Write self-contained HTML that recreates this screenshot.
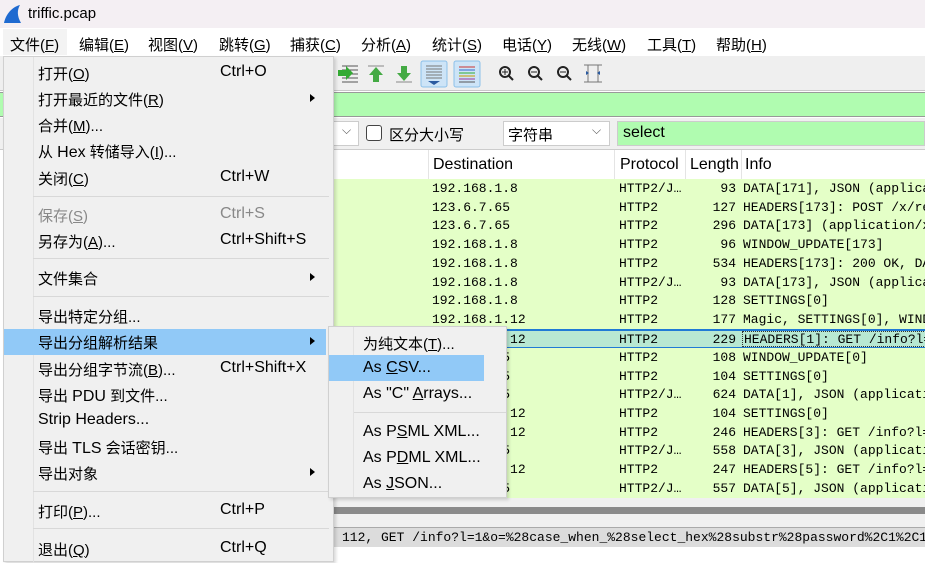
<!DOCTYPE html>
<html><head><meta charset="utf-8"><style>
*{margin:0;padding:0;box-sizing:border-box}
body{width:925px;height:562px;overflow:hidden;position:relative;background:#fff;font-family:"Liberation Sans","Noto Sans CJK SC",sans-serif;font-size:14px;color:#000}
.a{position:absolute;white-space:nowrap}
.m{font-family:"Liberation Mono","DejaVu Sans Mono",monospace;font-size:13px}
u{text-decoration:underline}
.row{position:absolute;left:334px;width:591px;height:19px;background:#e4ffc7;overflow:hidden}
.row span{position:absolute;top:2px;white-space:nowrap}
.mi{position:absolute;left:38px;white-space:nowrap;font-size:15px}
.sc{position:absolute;left:220px;white-space:nowrap;font-size:16px}
.arr{position:absolute;left:310px;width:0;height:0;border-left:5px solid #000;border-top:4px solid transparent;border-bottom:4px solid transparent}
.sep{position:absolute;left:33px;width:296px;height:1px;background:#d8d8d8}
.en{font-size:16px}
</style></head><body>
<div class="a" style="left:0;top:0;width:925px;height:28px;background:#f4eff3"></div>
<svg class="a" style="left:3px;top:4px" width="20" height="20" viewBox="0 0 20 20"><path d="M1 19 C3 10 9 3 17 1 C14 6 14 12 18 19 Z" fill="#1f6ad0"/></svg>
<div class="a" style="left:28px;top:5px;font-size:15px">triffic.pcap</div>
<div class="a" style="left:0;top:28px;width:925px;height:28px;background:#fff"></div>
<div class="a" style="left:3px;top:29px;width:64px;height:26px;background:#f3f3f3"></div>
<div class="a" style="left:10px;top:34px;font-size:15px">文件(<u>F</u>)</div>
<div class="a" style="left:79px;top:34px;font-size:15px">编辑(<u>E</u>)</div>
<div class="a" style="left:148px;top:34px;font-size:15px">视图(<u>V</u>)</div>
<div class="a" style="left:219px;top:34px;font-size:15px">跳转(<u>G</u>)</div>
<div class="a" style="left:290px;top:34px;font-size:15px">捕获(<u>C</u>)</div>
<div class="a" style="left:361px;top:34px;font-size:15px">分析(<u>A</u>)</div>
<div class="a" style="left:432px;top:34px;font-size:15px">统计(<u>S</u>)</div>
<div class="a" style="left:502px;top:34px;font-size:15px">电话(<u>Y</u>)</div>
<div class="a" style="left:572px;top:34px;font-size:15px">无线(<u>W</u>)</div>
<div class="a" style="left:647px;top:34px;font-size:15px">工具(<u>T</u>)</div>
<div class="a" style="left:716px;top:34px;font-size:15px">帮助(<u>H</u>)</div>
<div class="a" style="left:0;top:56px;width:925px;height:35px;background:#efefef;border-bottom:1px solid #c8c8c8"></div>
<svg class="a" style="left:334px;top:60px" width="280" height="28" viewBox="0 0 280 28">
<g fill="none" stroke="#555"><path d="M8 6h16M8 10h16M8 14h16M8 18h16M8 22h16"/></g>
<path d="M4 10h8v-4l7 7-7 7v-4H4z" fill="#3a3"/>
<path d="M34 6h16" stroke="#888"/><path d="M42 7l-7 8h4v7h6v-7h4z" fill="#4a4"/>
<path d="M62 22h16" stroke="#888"/><path d="M70 21l-7-8h4V6h6v7h4z" fill="#4a4"/>
<rect x="87" y="1" width="26" height="26" rx="2" fill="#cde4f7" stroke="#8cc0ea"/>
<g stroke="#777"><path d="M92 6h16M92 9h16M92 12h16M92 15h16M92 18h16"/></g><path d="M94 21h12l-6 4z" fill="#2a5aa0"/>
<rect x="120" y="1" width="26" height="26" rx="2" fill="#cde4f7" stroke="#8cc0ea"/>
<path d="M125 7h16" stroke="#c33"/><path d="M125 10h16" stroke="#36c"/><path d="M125 13h16" stroke="#3a3"/><path d="M125 16h16" stroke="#c90"/><path d="M125 19h16" stroke="#939"/><path d="M125 22h16" stroke="#555"/>
<g fill="none" stroke="#222" stroke-width="2"><circle cx="171" cy="12" r="5"/><path d="M175 16l4 4"/><circle cx="200" cy="12" r="5"/><path d="M204 16l4 4"/><circle cx="229" cy="12" r="5"/><path d="M233 16l4 4"/></g>
<path d="M168 12h6M171 9v6M197 12h6M226 12h6" stroke="#222"/>
<g stroke="#777"><path d="M250 5h18M250 22h18M254 5v17M264 5v17"/></g><path d="M252 11l3 2-3 2zM266 11l-3 2 3 2z" fill="#2a5aa0"/>
</svg>
<div class="a" style="left:0;top:92px;width:925px;height:25px;background:#b0fcb0;border-top:1px solid #9a9a9a;border-bottom:1px solid #999"></div>
<div class="a" style="left:0;top:118px;width:925px;height:32px;background:#f0f0f0;border-bottom:1px solid #ccc"></div>
<div class="a" style="left:334px;top:121px;width:25px;height:25px;background:#fff;border:1px solid #ccc;border-left:none"></div>
<div class="a" style="left:342px;top:123px;color:#555;font-size:12px">⌵</div>
<div class="a" style="left:366px;top:125px;width:16px;height:16px;border:1px solid #444;border-radius:3px;background:#fff"></div>
<div class="a" style="left:389px;top:124px;font-size:15px">区分大小写</div>
<div class="a" style="left:503px;top:121px;width:107px;height:25px;background:#fff;border:1px solid #ccc"></div>
<div class="a" style="left:508px;top:124px;font-size:15px">字符串</div>
<div class="a" style="left:592px;top:123px;color:#555;font-size:12px">⌵</div>
<div class="a" style="left:617px;top:121px;width:308px;height:25px;background:#b0fcb0;border:1px solid #ccc"></div>
<div class="a" style="left:623px;top:124px;font-size:16px">select</div>
<div class="a" style="left:334px;top:150px;width:591px;height:30px;background:#fff"></div>
<div class="a" style="left:428px;top:150px;width:1px;height:30px;background:#e4e4e4"></div>
<div class="a" style="left:614px;top:150px;width:1px;height:30px;background:#e4e4e4"></div>
<div class="a" style="left:685px;top:150px;width:1px;height:30px;background:#e4e4e4"></div>
<div class="a" style="left:741px;top:150px;width:1px;height:30px;background:#e4e4e4"></div>
<div class="a" style="left:433px;top:156px;font-size:16px">Destination</div>
<div class="a" style="left:620px;top:156px;font-size:16px">Protocol</div>
<div class="a" style="left:690px;top:156px;font-size:16px;width:50px;overflow:hidden">Length</div>
<div class="a" style="left:745px;top:156px;font-size:16px">Info</div>
<div class="m">
<div class="row" style="top:179px"><span style="left:98px">192.168.1.8</span><span style="left:285px">HTTP2/J…</span><span style="left:370px;width:32px;text-align:right">93</span><span style="left:409px">DATA[171], JSON (applica</span></div>
<div class="row" style="top:198px"><span style="left:98px">123.6.7.65</span><span style="left:285px">HTTP2</span><span style="left:370px;width:32px;text-align:right">127</span><span style="left:409px">HEADERS[173]: POST /x/re</span></div>
<div class="row" style="top:216px"><span style="left:98px">123.6.7.65</span><span style="left:285px">HTTP2</span><span style="left:370px;width:32px;text-align:right">296</span><span style="left:409px">DATA[173] (application/x</span></div>
<div class="row" style="top:235px"><span style="left:98px">192.168.1.8</span><span style="left:285px">HTTP2</span><span style="left:370px;width:32px;text-align:right">96</span><span style="left:409px">WINDOW_UPDATE[173]</span></div>
<div class="row" style="top:254px"><span style="left:98px">192.168.1.8</span><span style="left:285px">HTTP2</span><span style="left:370px;width:32px;text-align:right">534</span><span style="left:409px">HEADERS[173]: 200 OK, DA</span></div>
<div class="row" style="top:273px"><span style="left:98px">192.168.1.8</span><span style="left:285px">HTTP2/J…</span><span style="left:370px;width:32px;text-align:right">93</span><span style="left:409px">DATA[173], JSON (applica</span></div>
<div class="row" style="top:291px"><span style="left:98px">192.168.1.8</span><span style="left:285px">HTTP2</span><span style="left:370px;width:32px;text-align:right">128</span><span style="left:409px">SETTINGS[0]</span></div>
<div class="row" style="top:310px"><span style="left:98px">192.168.1.12</span><span style="left:285px">HTTP2</span><span style="left:370px;width:32px;text-align:right">177</span><span style="left:409px">Magic, SETTINGS[0], WIND</span></div>
<div class="row" style="top:329px;background:#b8e8d2;border-top:2px solid #1f7ad6;border-bottom:2px solid #1f7ad6;height:20px"><span style="left:98px;top:1px">192.168.1.12</span><span style="left:285px;top:1px">HTTP2</span><span style="left:370px;width:32px;text-align:right;top:1px">229</span><span style="left:408px;top:0;border:1px dotted #333;height:16px;padding-left:1px">HEADERS[1]: GET /info?l=</span></div>
<div class="row" style="top:348px"><span style="left:98px">123.6.7.65</span><span style="left:285px">HTTP2</span><span style="left:370px;width:32px;text-align:right">108</span><span style="left:409px">WINDOW_UPDATE[0]</span></div>
<div class="row" style="top:367px"><span style="left:98px">123.6.7.65</span><span style="left:285px">HTTP2</span><span style="left:370px;width:32px;text-align:right">104</span><span style="left:409px">SETTINGS[0]</span></div>
<div class="row" style="top:385px"><span style="left:98px">123.6.7.65</span><span style="left:285px">HTTP2/J…</span><span style="left:370px;width:32px;text-align:right">624</span><span style="left:409px">DATA[1], JSON (applicati</span></div>
<div class="row" style="top:404px"><span style="left:98px">192.168.1.12</span><span style="left:285px">HTTP2</span><span style="left:370px;width:32px;text-align:right">104</span><span style="left:409px">SETTINGS[0]</span></div>
<div class="row" style="top:423px"><span style="left:98px">192.168.1.12</span><span style="left:285px">HTTP2</span><span style="left:370px;width:32px;text-align:right">246</span><span style="left:409px">HEADERS[3]: GET /info?l=</span></div>
<div class="row" style="top:441px"><span style="left:98px">123.6.7.65</span><span style="left:285px">HTTP2/J…</span><span style="left:370px;width:32px;text-align:right">558</span><span style="left:409px">DATA[3], JSON (applicati</span></div>
<div class="row" style="top:460px"><span style="left:98px">192.168.1.12</span><span style="left:285px">HTTP2</span><span style="left:370px;width:32px;text-align:right">247</span><span style="left:409px">HEADERS[5]: GET /info?l=</span></div>
<div class="row" style="top:479px"><span style="left:98px">123.6.7.65</span><span style="left:285px">HTTP2/J…</span><span style="left:370px;width:32px;text-align:right">557</span><span style="left:409px">DATA[5], JSON (applicati</span></div>
</div>
<div class="a" style="left:334px;top:498px;width:591px;height:9px;background:#f0f0f0"></div>
<div class="a" style="left:334px;top:507px;width:591px;height:7px;background:#8a8a8a"></div>
<div class="a" style="left:334px;top:514px;width:591px;height:14px;background:#f0f0f0;border-bottom:1px solid #aaa"></div>
<div class="a" style="left:334px;top:528px;width:591px;height:19px;background:#dcdcdc"></div>
<div class="a m" style="left:342px;top:530px">112, GET /info?l=1&amp;o=%28case_when_%28select_hex%28substr%28password%2C1%2C1%2</div>
<div class="a" style="left:334px;top:547px;width:591px;height:15px;background:#fff"></div>
<div class="a" style="left:3px;top:56px;width:331px;height:506px;background:#f0f0f0;border:1px solid #d0d0d0;box-shadow:2px 2px 3px rgba(0,0,0,.15)">
<div style="position:absolute;left:29px;top:0;width:1px;height:506px;background:#e2e2e2"></div>
<div style="position:absolute;left:0;top:272px;width:322px;height:26px;background:#91c9f7"></div>
</div>
<div class="a" style="left:0;top:0">
<div class="mi" style="top:63px">打开(<u>O</u>)</div><div class="sc" style="top:63px">Ctrl+O</div>
<div class="mi" style="top:89px">打开最近的文件(<u>R</u>)</div><div class="arr" style="top:94px"></div>
<div class="mi" style="top:115px">合并(<u>M</u>)...</div>
<div class="mi" style="top:141px">从 <span class="en">Hex</span> 转储导入(<u>I</u>)...</div>
<div class="mi" style="top:168px">关闭(<u>C</u>)</div><div class="sc" style="top:168px">Ctrl+W</div>
<div class="sep" style="top:196px"></div>
<div class="mi" style="top:205px;color:#888">保存(<u>S</u>)</div><div class="sc" style="top:205px;color:#888">Ctrl+S</div>
<div class="mi" style="top:231px">另存为(<u>A</u>)...</div><div class="sc" style="top:231px">Ctrl+Shift+S</div>
<div class="sep" style="top:258px"></div>
<div class="mi" style="top:268px">文件集合</div><div class="arr" style="top:273px"></div>
<div class="sep" style="top:296px"></div>
<div class="mi" style="top:306px">导出特定分组...</div>
<div class="mi" style="top:332px">导出分组解析结果</div><div class="arr" style="top:337px"></div>
<div class="mi" style="top:359px">导出分组字节流(<u>B</u>)...</div><div class="sc" style="top:359px">Ctrl+Shift+X</div>
<div class="mi" style="top:385px">导出 <span class="en">PDU</span> 到文件...</div>
<div class="mi en" style="top:411px">Strip Headers...</div>
<div class="mi" style="top:437px">导出 <span class="en">TLS</span> 会话密钥...</div>
<div class="mi" style="top:463px">导出对象</div><div class="arr" style="top:468px"></div>
<div class="sep" style="top:491px"></div>
<div class="mi" style="top:501px">打印(<u>P</u>)...</div><div class="sc" style="top:501px">Ctrl+P</div>
<div class="sep" style="top:528px"></div>
<div class="mi" style="top:539px">退出(<u>Q</u>)</div><div class="sc" style="top:539px">Ctrl+Q</div>
</div>
<div class="a" style="left:328px;top:326px;width:179px;height:172px;background:#f0f0f0;border:1px solid #d0d0d0;box-shadow:2px 2px 3px rgba(0,0,0,.15)">
<div style="position:absolute;left:24px;top:0;width:1px;height:170px;background:#e2e2e2"></div>
<div style="position:absolute;left:0;top:28px;width:155px;height:26px;background:#91c9f7"></div>
<div style="position:absolute;left:25px;top:85px;width:152px;height:1px;background:#d8d8d8"></div>
</div>
<div class="mi" style="left:363px;top:333px">为纯文本(<u>T</u>)...</div>
<div class="mi en" style="left:363px;top:359px">As <u>C</u>SV...</div>
<div class="mi en" style="left:363px;top:385px">As "C" <u>A</u>rrays...</div>
<div class="mi en" style="left:363px;top:423px">As P<u>S</u>ML XML...</div>
<div class="mi en" style="left:363px;top:449px">As P<u>D</u>ML XML...</div>
<div class="mi en" style="left:363px;top:475px">As <u>J</u>SON...</div>
</body></html>
